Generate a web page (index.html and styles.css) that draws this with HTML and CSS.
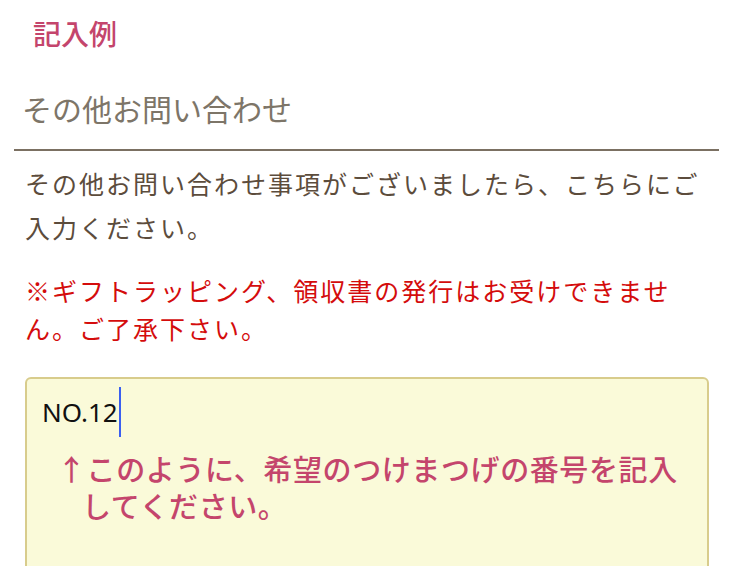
FILE: index.html
```html
<!DOCTYPE html>
<html lang="ja">
<head>
<meta charset="utf-8">
<link rel="stylesheet" href="styles.css">
</head>
<body>
<div class="page">
  <h2 class="example-label">記入例</h2>
  <div class="field-title">その他お問い合わせ</div>
  <hr class="rule">
  <p class="desc">その他お問い合わせ事項がございましたら、こちらにご入力ください。</p>
  <p class="notice">※ギフトラッピング、領収書の発行はお受けできません。ご了承下さい。</p>
  <div class="sample-box">
    <div class="typed">NO.12<span class="caret"></span></div>
    <p class="hint">↑このように、希望のつけまつげの番号を記入してください。</p>
  </div>
</div>
</body>
</html>
```
FILE: styles.css
```css
html, body {
  margin: 0;
  padding: 0;
  background: #ffffff;
}
body {
  font-family: "Noto Sans CJK JP", "Noto Sans", sans-serif;
  width: 740px;
  height: 566px;
  overflow: hidden;
}
.page {
  box-sizing: border-box;
  height: 566px;
  overflow: hidden;
  padding: 13px 21px 0 14px;
}
.example-label {
  margin: 0 0 0 19px;
  font-size: 28px;
  font-weight: 500;
  line-height: 40px;
  color: #c4456c;
}
.field-title {
  margin: 35px 0 0 8px;
  font-size: 30px;
  line-height: 40px;
  color: #7d7568;
  font-weight: 400;
}
.rule {
  margin: 21px 0 0 0;
  border: 0;
  height: 2px;
  background: #7b7062;
}
.desc {
  margin: 10px 0 0 11px;
  font-size: 25px;
  letter-spacing: 2px;
  line-height: 44px;
  color: #5c4c3c;
  width: 690px;
}
.notice {
  margin: 22px 0 0 11px;
  font-size: 25px;
  letter-spacing: 2px;
  line-height: 38px;
  color: #d40c0c;
  width: 670px;
}
.sample-box {
  margin: 30px 0 0 11px;
  width: 680px;
  height: 260px;
  background: #fafad9;
  border: 2px solid #d8cc8c;
  border-radius: 6px;
  padding: 0;
}
.typed {
  display: flex;
  align-items: center;
  margin: 8px 0 0 15px;
  height: 50px;
  font-family: "Noto Sans", sans-serif;
  font-size: 26px;
  color: #111111;
}
.caret {
  display: inline-block;
  width: 2px;
  height: 50px;
  background: #3a5ff0;
  margin-left: 1px;
}
.hint {
  margin: 13px 0 0 0;
  padding-left: 55px;
  text-indent: -25px;
  font-size: 29px;
  font-weight: 500;
  letter-spacing: 0.6px;
  line-height: 37px;
  color: #c4456c;
  width: 615px;
}
```
